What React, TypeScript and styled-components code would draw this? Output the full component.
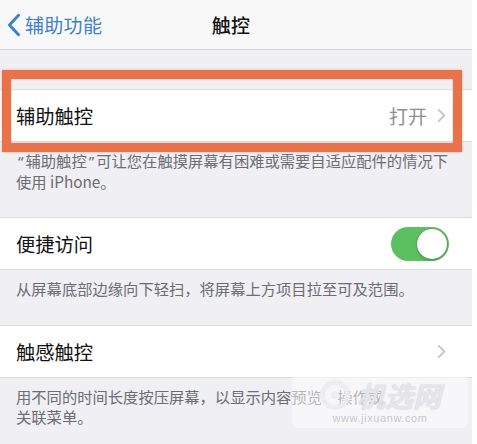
import React from "react";
import styled, { createGlobalStyle } from "styled-components";

const Global = createGlobalStyle`
  html, body { margin: 0; padding: 0; background: #ffffff; }
  body { font-family: "Noto Sans CJK SC", "Noto Sans", "Liberation Sans", sans-serif; }
`;

const Page = styled.div`
  width: 472px;
  height: 444px;
  overflow: hidden;
  background: #efeff4;
  position: relative;
`;

const NavBar = styled.div`
  height: 49px;
  background: #f8f8f8;
  border-bottom: 1px solid #d6d6da;
  display: grid;
  grid-template-columns: 1fr auto 1fr;
  align-items: center;
  padding-right: 10px;
`;

const Back = styled.div`
  display: flex;
  align-items: center;
  gap: 4px;
  padding-left: 7px;
  color: #3f80cc;
  font-size: 19px;
  letter-spacing: 0.3px;
`;

const NavTitle = styled.div`
  font-size: 19px;
  font-weight: 500;
  color: #111;
  letter-spacing: 0.3px;
`;

const Section = styled.div<{ $top: number }>`
  margin-top: ${(p) => p.$top}px;
  position: relative;
`;

const Row = styled.div`
  height: 51px;
  background: #ffffff;
  border-top: 1px solid #dcdce0;
  border-bottom: 1px solid #dcdce0;
  display: flex;
  align-items: center;
  padding: 0 26px 0 16px;
  box-sizing: content-box;
`;

const Label = styled.div`
  flex: 1;
  font-size: 19.3px;
  color: #111;
`;

const Value = styled.div`
  font-size: 19px;
  color: #8e8e93;
  margin-right: 10px;
`;

const Footer = styled.div`
  padding: 8px 0 0 16px;
  font-size: 15.3px;
  line-height: 20px;
  color: #6d6d72;
  white-space: nowrap;
`;

const Quote = styled.span`
  font-family: "Noto Sans", sans-serif;
  padding: 0 2px;
`;

const Highlight = styled.div`
  position: absolute;
  left: 2px;
  top: -19px;
  width: 460px;
  height: 82px;
  box-sizing: border-box;
  border: 9px solid #e8724a;
  box-shadow: 0 0 2px rgba(232, 114, 74, 0.6), inset 0 0 2px rgba(232, 114, 74, 0.6);
  pointer-events: none;
`;

const Toggle = styled.div<{ $on: boolean }>`
  width: 58px;
  height: 34px;
  border-radius: 17px;
  background: ${(p) => (p.$on ? "#5cbf60" : "#e5e5ea")};
  position: relative;
  margin-right: -3px;
`;

const Knob = styled.div`
  position: absolute;
  right: 2px;
  top: 2px;
  width: 30px;
  height: 30px;
  border-radius: 50%;
  background: #fff;
  box-shadow: 0 0 0 1px rgba(80, 130, 80, 0.35), 0 2px 3px rgba(0, 0, 0, 0.15);
`;

const Watermark = styled.div`
  position: absolute;
  left: 292px;
  top: 375px;
  width: 176px;
  height: 53px;
  border-radius: 6px;
  background: rgba(255, 255, 255, 0.5);
  display: flex;
  flex-direction: column;
  align-items: center;
  justify-content: center;
  gap: 1px;
`;

const WmTitle = styled.div`
  display: flex;
  align-items: center;
  gap: 6px;
  font-size: 28px;
  font-weight: 700;
  font-style: italic;
  line-height: 30px;
  color: rgba(236, 236, 240, 0.85);
  text-shadow: 0 0 1px rgba(170, 170, 180, 0.7);
`;

const WmUrl = styled.div`
  font-family: "Liberation Sans", sans-serif;
  font-size: 11px;
  letter-spacing: 0.6px;
  color: rgba(190, 190, 198, 0.85);
`;

const Chevron = ({ color, w, h }: { color: string; w: number; h: number }) => (
  <svg width={w} height={h} viewBox="0 0 8 13" fill="none">
    <path d="M1.5 1.5 L6.5 6.5 L1.5 11.5" stroke={color} strokeWidth="1.6" strokeLinecap="round" strokeLinejoin="round" />
  </svg>
);

const BackChevron = () => (
  <svg width="14" height="24" viewBox="0 0 12 21" fill="none">
    <path d="M10 2 L2 10.5 L10 19" stroke="#3f80cc" strokeWidth="2.6" strokeLinecap="round" strokeLinejoin="round" />
  </svg>
);

export default function App() {
  return (
    <>
      <Global />
      <Page>
        <NavBar>
          <Back>
            <BackChevron />
            <span>辅助功能</span>
          </Back>
          <NavTitle>触控</NavTitle>
          <div />
        </NavBar>

        <Section $top={39}>
          <Row>
            <Label>辅助触控</Label>
            <Value>打开</Value>
            <Chevron color="#c4c4c9" w={9} h={15} />
          </Row>
          <Highlight />
        </Section>
        <Footer>
          <Quote>“</Quote>辅助触控<Quote>”</Quote>可让您在触摸屏幕有困难或需要自适应配件的情况下
          <br />
          使用 iPhone。
        </Footer>

        <Section $top={26}>
          <Row>
            <Label>便捷访问</Label>
            <Toggle $on>
              <Knob />
            </Toggle>
          </Row>
        </Section>
        <Footer>从屏幕底部边缘向下轻扫，将屏幕上方项目拉至可及范围。</Footer>

        <Section $top={27}>
          <Row>
            <Label>触感触控</Label>
            <Chevron color="#c4c4c9" w={9} h={15} />
          </Row>
        </Section>
        <Footer>
          用不同的时间长度按压屏幕，以显示内容预览、操作或
          <br />
          关联菜单。
        </Footer>

        <Watermark>
          <WmTitle>
            <svg width="32" height="32" viewBox="0 0 32 32" fill="none">
              <circle cx="16" cy="16" r="12.5" stroke="rgba(236,236,240,0.9)" strokeWidth="5" />
              <circle cx="16" cy="16" r="4" fill="rgba(236,236,240,0.9)" />
            </svg>
            <span>机选网</span>
          </WmTitle>
          <WmUrl>www.jixuanw.com</WmUrl>
        </Watermark>
      </Page>
    </>
  );
}
